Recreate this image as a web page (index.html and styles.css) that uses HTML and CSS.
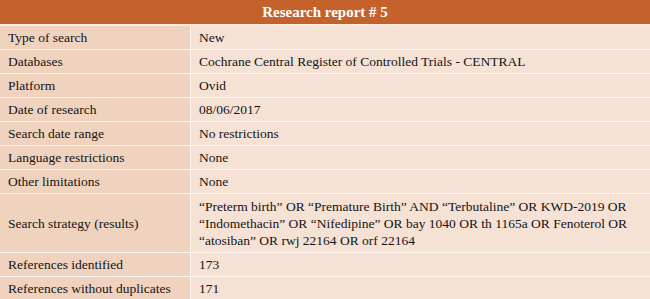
FILE: index.html
```html
<!DOCTYPE html>
<html lang="en">
<head>
<meta charset="utf-8">
<title>Research report # 5</title>
<link rel="stylesheet" href="styles.css">
</head>
<body>
<table class="report">
  <thead>
    <tr><th colspan="2" class="title">Research report # 5</th></tr>
  </thead>
  <tbody>
    <tr><td class="label">Type of search</td><td class="value">New</td></tr>
    <tr><td class="label">Databases</td><td class="value">Cochrane Central Register of Controlled Trials - CENTRAL</td></tr>
    <tr><td class="label">Platform</td><td class="value">Ovid</td></tr>
    <tr><td class="label">Date of research</td><td class="value">08/06/2017</td></tr>
    <tr><td class="label">Search date range</td><td class="value">No restrictions</td></tr>
    <tr><td class="label">Language restrictions</td><td class="value">None</td></tr>
    <tr><td class="label">Other limitations</td><td class="value">None</td></tr>
    <tr class="tall"><td class="label">Search strategy (results)</td><td class="value">“Preterm birth” OR “Premature Birth” AND “Terbutaline” OR KWD-2019 OR<br>“Indomethacin” OR “Nifedipine” OR bay 1040 OR th 1165a OR Fenoterol OR<br>“atosiban” OR rwj 22164 OR orf 22164</td></tr>
    <tr><td class="label">References identified</td><td class="value">173</td></tr>
    <tr><td class="label">References without duplicates</td><td class="value">171</td></tr>
  </tbody>
</table>
</body>
</html>
```
FILE: styles.css
```css
html, body {
  margin: 0;
  padding: 0;
  background: #ffffff;
}
.report {
  width: 650px;
  border-collapse: collapse;
  font-family: "Liberation Serif", "Times New Roman", serif;
  font-size: 13.5px;
  color: #141414;
}
.title {
  background: #c5612a;
  color: #ffffff;
  font-weight: bold;
  font-size: 15px;
  height: 24px;
  padding: 0;
  text-align: center;
  border-bottom: 2px solid #f8ece3;
}
.report td {
  line-height: 17px;
  padding: 3px 8px 3px 8px;
  border-bottom: 1px solid #fbf4ef;
  vertical-align: middle;
  white-space: nowrap;
}
.report tr.tall td {
  padding-top: 4px;
  padding-bottom: 3px;
}
.label {
  width: 174px;
  background: #efd3be;
  border-right: 1px solid #fbf4ef;
}
.value {
  background: #f5e2d4;
}
```
